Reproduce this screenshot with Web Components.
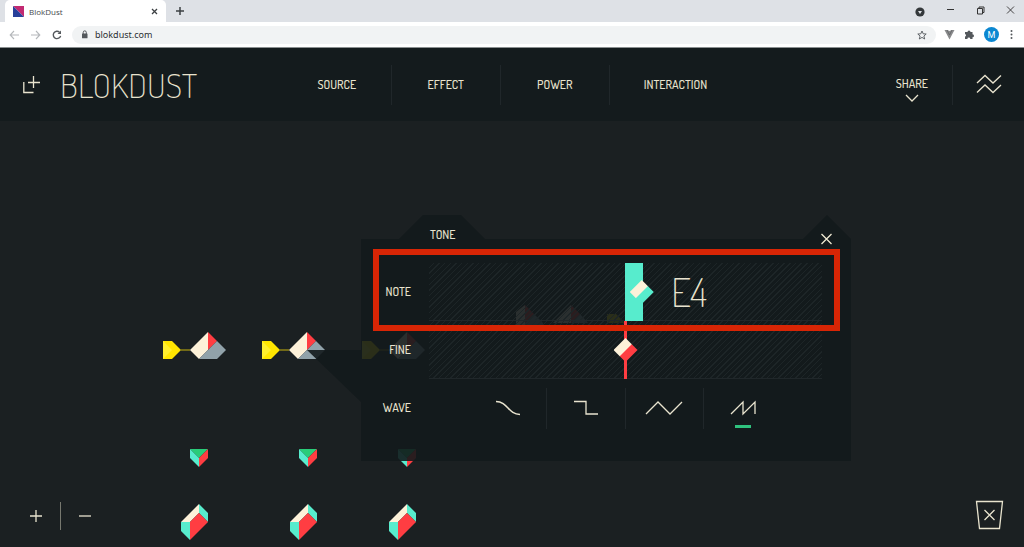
<!DOCTYPE html>
<html lang="en">
<head>
<meta charset="utf-8">
<title>BlokDust</title>
<style>
  html, body { height: 100%; margin: 0; }
  body {
    font-family: "Dosis", "Roboto Condensed", "Roboto", "Liberation Sans", sans-serif;
    --ink: #e9e4cf;
    --bar: #141b1d;
    --ground: #1b2022;
    --rule: #20272a;
    --red: #ff3d42;
    --teal: #57eccd;
    --cream: #fdf1d9;
    --green: #2fc27e;
    overflow: hidden;
  }
</style>
</head>
<body>
<blok-app></blok-app>

<template id="blok-app">
  <style>
    :host { display: flex; flex-direction: column; min-height: 100vh; background: var(--ground); color: var(--ink); }
    block-canvas { flex: 1; }
  </style>
  <browser-tabs></browser-tabs>
  <browser-toolbar></browser-toolbar>
  <app-header></app-header>
  <block-canvas>
    <tone-panel>
      <span slot="title">TONE</span>
    </tone-panel>
  </block-canvas>
</template>

<template id="browser-tabs">
  <style>
    :host { display: flex; height: 22px; background: #dee1e6; color: #45494d; font: 8px "Open Sans", "Noto Sans", sans-serif; padding-left: 5px; align-items: center; }
    button { border: 0; padding: 0; background: none; display: flex; color: inherit; }
    .tab { display: flex; align-items: center; box-sizing: border-box; width: 161px; height: 22px; padding: 0 8px; background: #fff; border-radius: 5px 5px 0 0; gap: 5px; }
    .tab span { flex: 1; }
    .new { margin-left: 8px; }
    .win { margin-left: auto; display: flex; align-items: center; gap: 21px; padding: 0 9px 2px 0; }
    .search { padding-top: 3px; }
  </style>
  <div class="tab">
    <svg width="11" height="11"><path fill="#c22a72" d="M0 0H11V11z"/><path fill="#28409a" d="M0 0V11H11z"/></svg>
    <span>BlokDust</span>
    <button aria-label="Close tab"><svg width="7" height="7"><path d="M1 1L6 6M6 1L1 6" stroke="#3c4043" stroke-width="1.3"/></svg></button>
  </div>
  <button class="new" aria-label="New tab"><svg width="12" height="10"><path d="M6 1V9M2 5H10" stroke="#3c4043" stroke-width="1.5"/></svg></button>
  <div class="win">
    <button class="search" aria-label="Search tabs"><svg width="10" height="10"><circle cx="5" cy="5" r="4.600" fill="#34383b"/><path d="M3 4H7L5 7z" fill="#dee1e6"/></svg></button>
    <button aria-label="Minimise"><svg width="9" height="8"><path d="M1 3.500H8" stroke="#333"/></svg></button>
    <button aria-label="Restore"><svg width="9" height="9" fill="none" stroke="#333"><path d="M1.500 2.500H6.500V8H1.500zM3 2V1H8V6.500H7"/></svg></button>
    <button aria-label="Close"><svg width="9" height="8"><path d="M1 .5L8 7.500M8 .5L1 7.500" stroke="#333" stroke-width=".9"/></svg></button>
  </div>
</template>

<template id="browser-toolbar">
  <style>
    :host { display: flex; align-items: center; box-sizing: border-box; height: 26px; padding: 0 9px; background: #fff; border-bottom: 1px solid #8a8f90; }
    button { border: 0; padding: 0; background: none; display: flex; }
    nav { display: flex; gap: 10px; margin-right: 9px; }
    .address { flex: 1; display: flex; align-items: center; height: 18px; padding: 0 9px; border-radius: 9px; background: #f1f3f4; gap: 7px; }
    input { flex: 1; min-width: 0; border: 0; padding: 0; background: none; font: 9px "Noto Sans", sans-serif; color: #2b2f32; outline: 0; }
    .tools { display: flex; align-items: center; gap: 9px; margin-left: 8px; }
    .me { width: 15px; height: 15px; border-radius: 50%; background: #0b87d1; color: #fff; align-items: center; justify-content: center; font: 9px "Roboto", sans-serif; }
  </style>
  <nav>
    <button aria-label="Back"><svg width="11" height="10" fill="none" stroke="#b5b8bb" stroke-width="1.1"><path d="M10 5H1.500M5 1L1.200 5L5 9"/></svg></button>
    <button aria-label="Forward"><svg width="11" height="10" fill="none" stroke="#b5b8bb" stroke-width="1.1"><path d="M1 5H9.500M6 1L9.800 5L6 9"/></svg></button>
    <button aria-label="Reload"><svg width="12" height="10" fill="none" stroke="#54585c" stroke-width="1.400"><path d="M8.500 2.200A3.700 3.700 0 1 0 9.600 5.800"/><path d="M10 .5V4H6.500z" fill="#54585c" stroke="none"/></svg></button>
  </nav>
  <div class="address">
    <svg width="7" height="9"><rect x="1" y="3.500" width="5.500" height="4.800" rx=".6" fill="#54585c"/><path d="M2.200 4V2.500A1.500 1.600 0 0 1 5.300 2.500V4" fill="none" stroke="#54585c"/></svg>
    <input aria-label="Address" value="blokdust.com">
    <button aria-label="Bookmark"><svg width="10" height="10"><path d="M5 1L6.200 3.800L9.200 4L6.900 6L7.700 9L5 7.400L2.300 9L3.100 6L.8 4L3.800 3.800z" fill="none" stroke="#54585c" stroke-width=".9"/></svg></button>
  </div>
  <div class="tools">
    <button aria-label="Vue extension"><svg width="11" height="11"><path d="M.5 1H3.500L5.500 2L7.500 1H10.500L5.500 10.500z" fill="#8a8b8c"/><path d="M3 1L5.500 6L8 1" fill="none" stroke="#5f6163" stroke-width=".8"/></svg></button>
    <button aria-label="Extensions"><svg width="11" height="11" fill="#54585c"><path d="M1 3H3.500A1.500 1.500 0 0 1 6.500 3H8.500V5.200A1.500 1.500 0 0 1 8.500 8.200V10H6.300A1.400 1.400 0 0 0 3.400 10H1V7.700A1.400 1.400 0 0 0 1 5z"/></svg></button>
    <button class="me" aria-label="Profile">M</button>
    <button aria-label="Menu"><svg width="7" height="11" fill="#54585c"><circle cx="3.500" cy="2" r="1"/><circle cx="3.500" cy="5.500" r="1"/><circle cx="3.500" cy="9" r="1"/></svg></button>
  </div>
</template>

<template id="app-header">
  <style>
    :host { display: grid; grid-template-columns: 1fr auto 1fr; align-items: center; height: 73px; background: var(--bar); }
    .brand { display: flex; align-items: center; gap: 20px; padding-left: 23px; }
    h1 { margin: 0; font-size: 34px; line-height: 40px; font-weight: 200; }
    nav, .right { display: flex; align-items: center; }
    .right { justify-content: flex-end; }
    button { border: 0; padding: 0; background: none; color: inherit; font: 500 12px/16px "Dosis", "Roboto Condensed", "Roboto", sans-serif; }
    nav button { box-sizing: border-box; min-width: 109px; height: 40px; padding: 0 34px; border-right: 1px solid var(--rule); }
    nav button:last-child { border: 0; }
    .share { display: flex; flex-direction: column; align-items: center; justify-content: center; gap: 2px; padding: 9px 24px 0; height: 40px; box-sizing: border-box; border-right: 1px solid var(--rule); }
    .menu { display: flex; padding: 0 22px 0 23px; }
    svg { fill: none; stroke: var(--ink); }
  </style>
  <div class="brand">
    <svg width="17" height="18"><path d="M10.500 0V12M5 6.500H17M.8 6V16.500H10.500" stroke-width="1.3"/></svg>
    <h1>BLOKDUST</h1>
  </div>
  <nav>
    <button>SOURCE</button><button>EFFECT</button><button>POWER</button><button>INTERACTION</button>
  </nav>
  <div class="right">
    <button class="share">SHARE<svg width="14" height="8"><path d="M1 1L7 7L13 1" stroke-width="1.3"/></svg></button>
    <button class="menu" aria-label="Menu"><svg width="26" height="22"><path d="M1 9L9 1.500L17 9L25 1.500M1 18.500L9 11L17 18.500L25 11" stroke-width="1.300"/></svg></button>
  </div>
</template>

<template id="block-canvas">
  <style>
    :host { position: relative; display: flex; align-items: flex-end; justify-content: space-between; box-sizing: border-box; padding: 0 20px 17px 26px; }
    .nodes { position: absolute; left: 0; top: 0; width: 100%; height: 100%; }
    .zoom { position: relative; display: flex; align-items: center; gap: 14px; }
    .zoom i { width: 1px; height: 28px; background: #77786f; }
    button { position: relative; border: 0; padding: 0; background: none; display: flex; }
    button svg { fill: none; stroke: var(--ink); stroke-width: 1.300; }
    ::slotted(*) { position: absolute; left: 307px; top: 94px; }
  </style>
  <svg class="nodes" aria-hidden="true">
    <defs>
      <g id="source">
        <path fill="#ffe500" d="M0 9H9L18 18L9 27H0z"/><path fill="#ffee2e" d="M0 9L9 18L0 27z"/>
        <path stroke="#8f8214" stroke-width="1.500" d="M18 18H27"/>
        <path fill="#fdf1d9" d="M45 0L27 18L36 27L45 18z"/><path fill="#ff3d42" d="M45 0L54 9L45 18z"/><path fill="#91a2aa" d="M54 9L63 18L54 27H36z"/>
      </g>
      <g id="power">
        <path fill="#29cc79" d="M0 0H18L9 9z"/><path fill="#57eccd" d="M0 0L9 9V18L0 9z"/><path fill="#ff3d42" d="M18 0L9 9V18L18 9z"/>
      </g>
      <g id="gem">
        <path fill="#fdf1d9" d="M18 0L0 18H9L18 9z"/><path fill="#57eccd" d="M18 0L27 9V18L18 9zM0 18H9V36L0 27z"/><path fill="#ff3d42" d="M9 18L18 9L27 18L9 36z"/>
      </g>
    </defs>
    <use href="#source" x="163" y="211"/><use href="#source" x="262" y="211"/><use href="#source" x="362" y="211"/>
    <path fill="#fdf1d9" d="M516 191L525 184V204H516z"/><path fill="#ff3d42" d="M525 184L534 193L525 202z"/><path fill="#91a2aa" d="M534 193L543 202V204H525V202z"/>
    <path fill="#fdf1d9" d="M571 184L553 202H571z"/><path fill="#ff3d42" d="M571 184L580 193L571 202z"/><path fill="#91a2aa" d="M580 193L588 202H571z"/>
    <path fill="#ffe500" d="M607 193H616L625 202H607z"/>
    <use href="#power" x="190" y="328"/><use href="#power" x="299" y="328"/><use href="#power" x="398" y="328"/>
    <use href="#gem" x="181" y="383"/><use href="#gem" x="290" y="383"/><use href="#gem" x="389" y="383"/>
  </svg>
  <slot></slot>
  <div class="zoom">
    <button aria-label="Zoom in"><svg width="20" height="20"><path d="M10 4V16M4 10H16"/></svg></button>
    <i></i>
    <button aria-label="Zoom out"><svg width="20" height="20"><path d="M4 10H16"/></svg></button>
  </div>
  <button aria-label="Delete block"><svg width="29" height="30"><path d="M1.500 1.500H27.500L24.500 28.500H4.500zM9.500 10L19.500 20M19.500 10L9.500 20"/></svg></button>
</template>

<template id="tone-panel">
  <style>
    :host { display: block; width: 544px; box-sizing: border-box; padding-left: 54px; isolation: isolate; }
    .shape { position: absolute; inset: 0; z-index: -1; background: #131a1c; opacity: .9;
      clip-path: polygon(54px 24px, 92px 24px, 116px 0, 154px 0, 178px 24px, 496px 24px, 520px 0, 544px 24px, 544px 100%, 54px 100%, 54px 187px, 0 135px, 54px 135px); }
    header { display: flex; justify-content: space-between; align-items: center; box-sizing: border-box; height: 36px; padding: 4px 18px 0 69px; font-size: 12px; line-height: 16px; font-weight: 500; }
    header button { display: flex; border: 0; padding: 8px 0 0; background: none; }
    .mark { position: absolute; left: 66px; top: 34px; right: 11px; height: 82px; box-sizing: border-box; border: 6px solid #d82505; pointer-events: none; z-index: 1; }
    .rows { padding: 12px 29px 24px 0; }
  </style>
  <div class="shape"></div>
  <header>
    <slot name="title"></slot>
    <button aria-label="Close panel"><svg width="13" height="12"><path d="M1.500 1L11.500 11M11.500 1L1.500 11" stroke="#efe9d3" stroke-width="1.300"/></svg></button>
  </header>
  <div class="rows">
    <param-slider label="NOTE" value="544" kind="note">E4</param-slider>
    <param-slider label="FINE" value="500" kind="fine"></param-slider>
    <wave-picker></wave-picker>
  </div>
  <div class="mark"></div>
</template>

<template id="param-slider">
  <style>
    :host { display: grid; grid-template-columns: 50px 1fr; column-gap: 18px; align-items: center; --tone: var(--red); }
    :host([kind="note"]) { --tone: var(--teal); }
    label { text-align: right; font-size: 12px; line-height: 16px; font-weight: 500; }
    .track { display: grid; grid-template-columns: 196px 1fr; align-items: center; height: 58px; box-sizing: border-box; border-bottom: 1px solid var(--rule);
      background: repeating-linear-gradient(135deg, transparent 0 3px, #1d2527 3px 4px); }
    .bar { grid-area: 1 / 2; width: 18px; height: 58px; background: var(--teal); }
    :host([kind="fine"]) .bar { width: 3px; background: var(--red); margin-left: -1px; }
    output { grid-area: 1 / 2; padding: 0 0 3px 46px; font-size: 40px; line-height: 48px; font-weight: 200; }
    input { grid-area: 1 / 1 / 2 / 3; appearance: none; width: 100%; height: 24px; margin: 0; background: none; z-index: 1; outline: 0; }
    input::-webkit-slider-thumb { appearance: none; width: 24px; height: 24px; border: 0; border-radius: 0;
      background: linear-gradient(135deg, var(--cream) 49%, var(--tone) 51%); clip-path: polygon(50% 0, 100% 50%, 50% 100%, 0 50%); }
  </style>
  <label for="range"></label>
  <div class="track">
    <div class="bar"></div>
    <output for="range"><slot></slot></output>
    <input id="range" type="range" max="1000">
  </div>
</template>

<template id="wave-picker">
  <style>
    :host { display: block; }
    fieldset { display: grid; grid-template-columns: 50px 1fr; column-gap: 18px; align-items: center; height: 58px; border: 0; margin: 0; padding: 0; }
    .name { text-align: right; font-size: 12px; line-height: 16px; font-weight: 500; }
    .choices { display: grid; grid-template-columns: repeat(4, 1fr); padding: 0 40px; }
    label { position: relative; display: grid; place-items: center; height: 41px; border-right: 1px solid var(--rule); }
    label:last-child { border: 0; }
    input { position: absolute; inset: 0; width: 100%; height: 100%; margin: 0; opacity: 0; }
    svg { fill: none; stroke: var(--ink); stroke-width: 1.300; }
    label:has(:checked)::after { content: ""; position: absolute; bottom: 1px; width: 16px; height: 3px; background: var(--green); }
  </style>
  <fieldset aria-labelledby="name">
    <span class="name" id="name">WAVE</span>
    <div class="choices">
      <label><input type="radio" name="wave" aria-label="Sine"><svg width="26" height="16"><path d="M1 1.500C13 1.500 13 14.500 25 14.500" stroke-width="1.500"/></svg></label>
      <label><input type="radio" name="wave" aria-label="Square"><svg width="26" height="16"><path d="M1 1.500H13V14H25"/></svg></label>
      <label><input type="radio" name="wave" aria-label="Triangle"><svg width="38" height="16"><path d="M1 14L13 2L25 14L37 2"/></svg></label>
      <label><input type="radio" name="wave" aria-label="Sawtooth" checked><svg width="26" height="16"><path d="M1 14L13 2V14L25 2V14"/></svg></label>
    </div>
  </fieldset>
</template>

<script>
  class TemplateElement extends HTMLElement {
    constructor() {
      super();
      this.attachShadow({ mode: "open" }).append(
        document.getElementById(this.localName).content.cloneNode(true));
    }
  }
  class ParamSlider extends TemplateElement {
    connectedCallback() {
      this.shadowRoot.querySelector("label").textContent = this.getAttribute("label");
      this.shadowRoot.querySelector("input").value = this.getAttribute("value");
    }
  }
  customElements.define("param-slider", ParamSlider);
  for (const name of ["browser-tabs", "browser-toolbar", "app-header", "wave-picker", "tone-panel", "block-canvas", "blok-app"])
    customElements.define(name, class extends TemplateElement {});
</script>
</body>
</html>
